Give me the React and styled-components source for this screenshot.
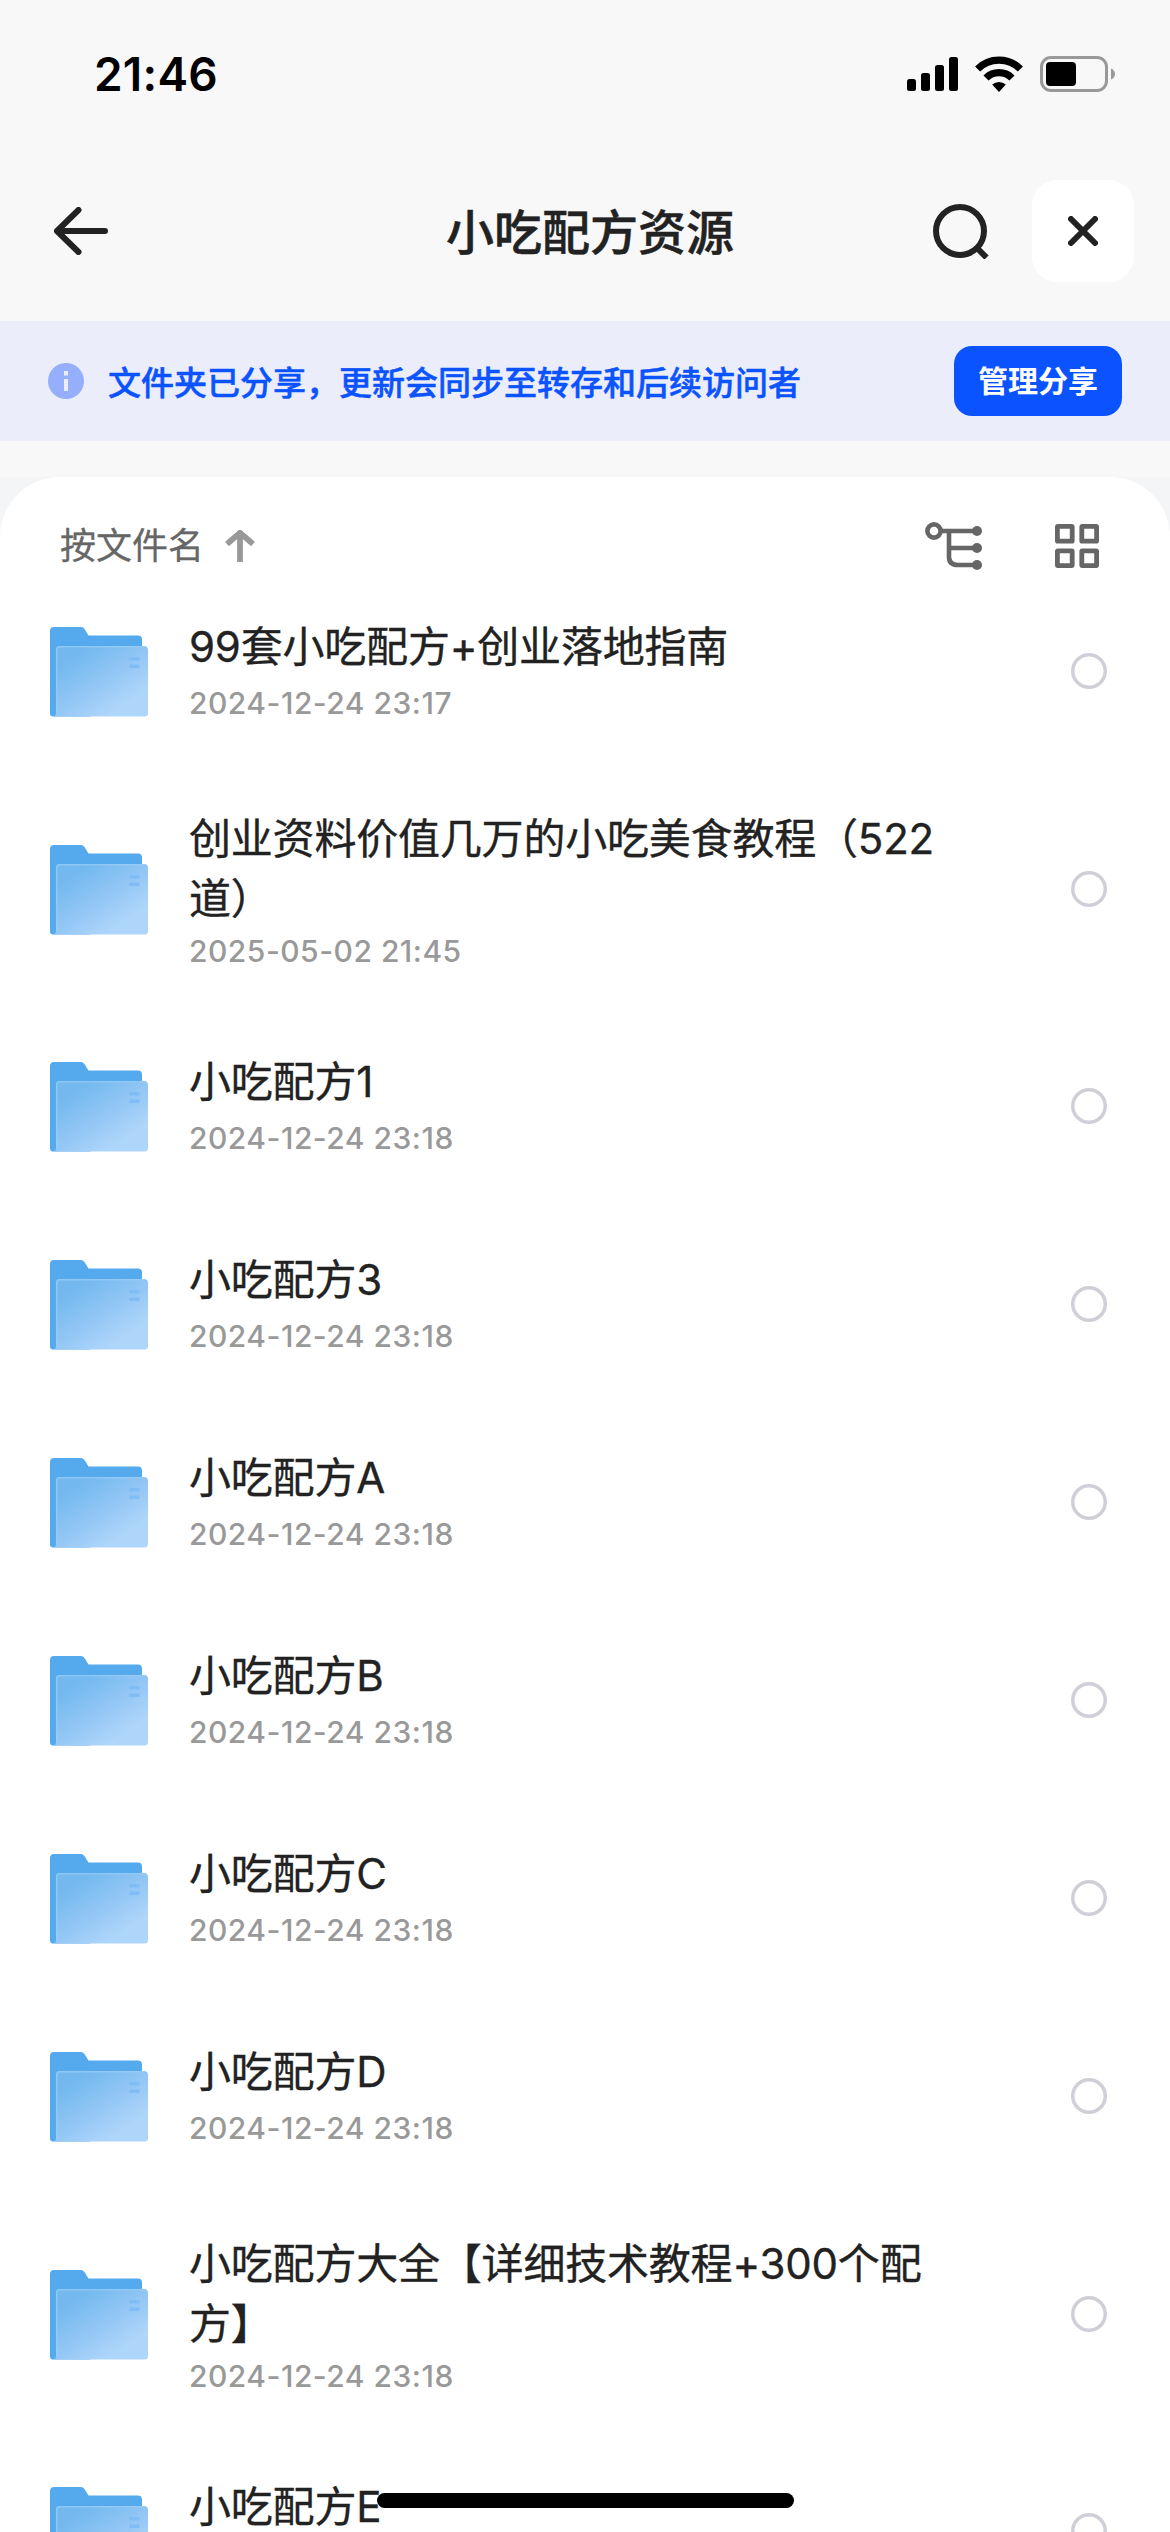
import React, { useState } from "react";
import styled, { createGlobalStyle } from "styled-components";

const GlobalStyle = createGlobalStyle`
	* {
		box-sizing: border-box;
	}

	body {
		margin: 0;
		background: #f8f8f8;
		font-family: Inter, "Noto Sans CJK SC", sans-serif;
		color: #222;
	}
`;

const Screen = styled.div`
	position: relative;
	display: flex;
	flex-direction: column;
	width: 1170px;
	height: 2532px;
	overflow: hidden;
	background: #f8f8f8;
`;

const StatusBar = styled.div`
	display: flex;
	align-items: center;
	justify-content: space-between;
	flex-shrink: 0;
	height: 148px;
	padding: 0 55px 0 94px;
	color: #000;
`;

const Time = styled.div`
	font-size: 46px;
	font-weight: 600;
	letter-spacing: 0.2px;
`;

const StatusIcons = styled.div`
	display: flex;
	align-items: center;
	gap: 17px;
`;

const NavBar = styled.div`
	display: grid;
	grid-template-columns: 386px 300px 1fr;
	align-items: center;
	flex-shrink: 0;
	height: 173px;
	padding: 0 36px 7px 54px;
`;

const NavTitle = styled.h1`
	margin: 3px 0 0;
	font-size: 48px;
	font-weight: 500;
	line-height: 60px;
	text-align: center;
	white-space: nowrap;
	-webkit-text-stroke: 0.5px;
`;

const NavActions = styled.div`
	display: flex;
	align-items: center;
	justify-content: flex-end;
	gap: 43px;
`;

const IconButton = styled.button`
	display: flex;
	align-items: center;
	justify-content: flex-start;
	padding: 0;
	border: none;
	background: none;
`;

const CloseButton = styled(IconButton)`
	justify-content: center;
	width: 102px;
	height: 102px;
	border-radius: 25px;
	background: #fff;
`;

const Banner = styled.div`
	display: flex;
	align-items: center;
	flex-shrink: 0;
	height: 120px;
	padding: 0 48px;
	background: #ebeefa;
`;

const BannerText = styled.div`
	flex: 1;
	margin-left: 24px;
	padding-top: 4px;
	font-size: 33px;
	font-weight: 500;
	line-height: 40px;
	color: #0b53ff;
	white-space: nowrap;
	-webkit-text-stroke: 0.5px;
`;

const ManageButton = styled.button`
	width: 168px;
	height: 70px;
	padding: 0;
	border: none;
	border-radius: 18px;
	background: #0b53ff;
	color: #fff;
	font-family: inherit;
	font-size: 30px;
	font-weight: 700;
	line-height: 40px;
`;

const SheetArea = styled.div`
	flex: 1;
	min-height: 0;
	margin-top: 36px;
	background: #f3f5f7;
`;

const Sheet = styled.div`
	height: 100%;
	border-radius: 60px 60px 0 0;
	background: #fff;
`;

const Toolbar = styled.div`
	display: flex;
	align-items: center;
	justify-content: space-between;
	height: 96px;
	padding: 42px 71px 0 60px;
`;

const SortLabel = styled.div`
	display: flex;
	align-items: center;
	gap: 21px;
	font-size: 36px;
	line-height: 54px;
	color: #666;
	-webkit-text-stroke: 0.3px;
`;

const ViewIcons = styled.div`
	display: flex;
	align-items: center;
	gap: 73px;
`;

const Row = styled.div`
	display: flex;
	align-items: center;
	height: ${props => (props.$tall ? "237px" : "198px")};
	padding: 0 63px 0 50px;
`;

const RowBody = styled.div`
	width: 764px;
	margin-left: 41px;
	padding-top: ${props => (props.$tall ? "5px" : "0")};
`;

const Name = styled.div`
	font-size: 42px;
	line-height: 60px;
	letter-spacing: -0.2px;
	-webkit-text-stroke: 0.35px;
`;

const DateText = styled.div`
	margin-top: ${props => (props.$tall ? "-2px" : "2px")};
	font-size: 30px;
	font-weight: 450;
	line-height: 48px;
	letter-spacing: 0.5px;
	color: #999;
`;

const Radio = styled.div`
	width: 36px;
	height: 36px;
	margin: 0 0 2px auto;
	border-radius: 50%;
	box-shadow: inset 0 0 0 3.5px ${props => (props.$checked ? "#0b53ff" : "#cfcfd7")};
`;

const HomeIndicator = styled.div`
	position: absolute;
	left: 377px;
	bottom: 24px;
	width: 417px;
	height: 15px;
	border-radius: 8px;
	background: #000;
`;

const SignalIcon = () => (
	<svg width="51" height="34" viewBox="0 0 51 34">
		<rect x="0" y="22" width="9" height="12" rx="2.5" />
		<rect x="14" y="16" width="9" height="18" rx="2.5" />
		<rect x="28" y="8" width="9" height="26" rx="2.5" />
		<rect x="42" y="0" width="9" height="34" rx="2.5" />
	</svg>
);

const WifiIcon = () => (
	<svg width="48" height="36" viewBox="0 0 48 36">
		<g fill="none" stroke="#000" strokeWidth="7.2">
			<path d="M2.6 13A30.4 30.4 0 0 1 45.4 13" />
			<path d="M11 22A18.6 18.6 0 0 1 37 22" />
		</g>
		<path d="M24 36L17.2 28.6A10 10 0 0 1 30.8 28.6Z" />
	</svg>
);

const BatteryIcon = () => (
	<svg width="75" height="36" viewBox="0 0 75 36">
		<rect
			x="1.5"
			y="1.5"
			width="65"
			height="33"
			rx="9.5"
			fill="none"
			stroke="#999"
			strokeWidth="3"
		/>
		<rect x="6" y="6" width="30" height="24" rx="4" />
		<path d="M71 12.5Q75 14.5 75 18T71 23.5Z" fill="#999" />
	</svg>
);

const BackIcon = () => (
	<svg width="54" height="48" viewBox="0 0 54 48">
		<path
			d="M24.5 3L3 24L24.5 45M3 24H51"
			fill="none"
			stroke="#222"
			strokeWidth="6"
			strokeLinecap="round"
			strokeLinejoin="round"
		/>
	</svg>
);

const SearchIcon = () => (
	<svg width="56" height="56" viewBox="0 0 56 56">
		<g fill="none" stroke="#222" strokeWidth="6">
			<circle cx="27" cy="28" r="24" />
			<path d="M43.5 44.5L53.5 54.5" />
		</g>
	</svg>
);

const CloseIcon = () => (
	<svg width="30" height="30" viewBox="0 0 30 30">
		<path
			d="M3 3L27 27M27 3L3 27"
			stroke="#222"
			strokeWidth="6"
			strokeLinecap="round"
		/>
	</svg>
);

const InfoIcon = () => (
	<svg width="36" height="36" viewBox="0 0 36 36">
		<circle cx="18" cy="18" r="18" fill="#95affd" />
		<rect x="16" y="8" width="4" height="4.5" fill="#ebeefa" />
		<rect x="16" y="16" width="4" height="12" fill="#ebeefa" />
	</svg>
);

const SortArrowIcon = () => (
	<svg width="30" height="32" viewBox="0 0 30 32">
		<path
			d="M2 14L15 2.8L28 14M15 3V32"
			fill="none"
			stroke="#999"
			strokeWidth="5.8"
		/>
	</svg>
);

const TreeIcon = () => (
	<svg width="57" height="48" viewBox="0 0 57 48">
		<g fill="none" stroke="#666" strokeWidth="4.6">
			<circle cx="9" cy="9" r="6.6" />
			<path d="M17 9H52M24 9V35Q24 43 33 43H52M24 26H52" />
		</g>
		<g fill="#666">
			<circle cx="52" cy="9" r="5" />
			<circle cx="52" cy="26" r="5" />
			<circle cx="52" cy="43" r="5" />
		</g>
	</svg>
);

const GridIcon = () => (
	<svg width="44" height="44" viewBox="0 0 44 44">
		<g fill="none" stroke="#666" strokeWidth="4.8">
			<rect x="2.4" y="2.4" width="14.8" height="14.8" rx="0.5" />
			<rect x="26.8" y="2.4" width="14.8" height="14.8" rx="0.5" />
			<rect x="2.4" y="26.8" width="14.8" height="14.8" rx="0.5" />
			<rect x="26.8" y="26.8" width="14.8" height="14.8" rx="0.5" />
		</g>
	</svg>
);

const FolderIcon = () => (
	<svg width="98" height="90" viewBox="0 0 98 90">
		<defs>
			<linearGradient id="front" x1="0.1" y1="0.1" x2="0.85" y2="0.95">
				<stop offset="0.1" stopColor="#73b9ef" />
				<stop offset="0.5" stopColor="#92c6f5" />
				<stop offset="0.85" stopColor="#aed5fa" />
			</linearGradient>
		</defs>
		<path
			d="M0 4Q0 0 4 0H31Q33 0 34.5 2L38.5 8.5H88Q92 8.5 92 12.5V60L40 89.5H3Q0 89.5 0 86.5Z"
			fill="#55aaee"
		/>
		<path
			d="M6 22Q6 19 9 19H94Q98 19 98 23V86Q98 89.5 94.5 89.5H4Q6 89 6 86Z"
			fill="url(#front)"
		/>
		<path
			d="M6.8 86V22.5Q6.8 19.8 9.5 19.8H94"
			fill="none"
			stroke="#9bcdf6"
			strokeOpacity="0.7"
			strokeWidth="1.6"
		/>
		<rect x="79" y="30" width="10.5" height="3.4" rx="1" fill="#80bdf4" />
		<rect x="79" y="37.5" width="10.5" height="3.4" rx="1" fill="#80bdf4" />
	</svg>
);

const files = [
	{ name: "99套小吃配方+创业落地指南", date: "2024-12-24 23:17" },
	{
		name: "创业资料价值几万的小吃美食教程（522道）",
		date: "2025-05-02 21:45",
		tall: true
	},
	{ name: "小吃配方1", date: "2024-12-24 23:18" },
	{ name: "小吃配方3", date: "2024-12-24 23:18" },
	{ name: "小吃配方A", date: "2024-12-24 23:18" },
	{ name: "小吃配方B", date: "2024-12-24 23:18" },
	{ name: "小吃配方C", date: "2024-12-24 23:18" },
	{ name: "小吃配方D", date: "2024-12-24 23:18" },
	{
		name: "小吃配方大全【详细技术教程+300个配方】",
		date: "2024-12-24 23:18",
		tall: true
	},
	{ name: "小吃配方E", date: "2024-12-24 23:18" }
];

const FileRow = ({ file, checked, onToggle }) => (
	<Row $tall={file.tall} onClick={onToggle}>
		<FolderIcon />
		<RowBody $tall={file.tall}>
			<Name>{file.name}</Name>
			<DateText $tall={file.tall}>{file.date}</DateText>
		</RowBody>
		<Radio $checked={checked} />
	</Row>
);

const App = () => {
	const [selected, setSelected] = useState(null);

	return (
		<Screen>
			<GlobalStyle />
			<StatusBar>
				<Time>21:46</Time>
				<StatusIcons>
					<SignalIcon />
					<WifiIcon />
					<BatteryIcon />
				</StatusIcons>
			</StatusBar>
			<NavBar>
				<IconButton>
					<BackIcon />
				</IconButton>
				<NavTitle>小吃配方资源</NavTitle>
				<NavActions>
					<IconButton>
						<SearchIcon />
					</IconButton>
					<CloseButton>
						<CloseIcon />
					</CloseButton>
				</NavActions>
			</NavBar>
			<Banner>
				<InfoIcon />
				<BannerText>文件夹已分享，更新会同步至转存和后续访问者</BannerText>
				<ManageButton>管理分享</ManageButton>
			</Banner>
			<SheetArea>
				<Sheet>
					<Toolbar>
						<SortLabel>
							按文件名
							<SortArrowIcon />
						</SortLabel>
						<ViewIcons>
							<TreeIcon />
							<GridIcon />
						</ViewIcons>
					</Toolbar>
					{files.map(file => (
						<FileRow
							key={file.name}
							file={file}
							checked={selected === file.name}
							onToggle={() => setSelected(file.name)}
						/>
					))}
				</Sheet>
			</SheetArea>
			<HomeIndicator />
		</Screen>
	);
};

export default App;
